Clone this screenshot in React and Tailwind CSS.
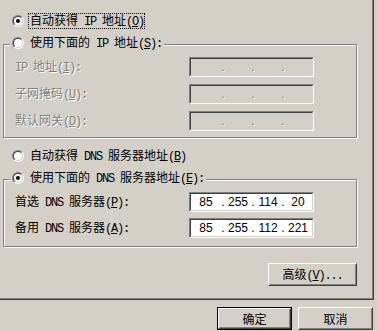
import React from "react";

function Txt({ s }) {
  const parts = s.split(/([\x20-\x7e]+)/).filter((p) => p !== "");
  return (
    <>
      {parts.map((p, i) =>
        /^[\x20-\x7e]+$/.test(p) ? (
          <span key={i} className="font-['Liberation_Mono'] tracking-[-1.2px] whitespace-pre">
            {p}
          </span>
        ) : (
          <span key={i}>{p}</span>
        )
      )}
    </>
  );
}

function Label({ t }) {
  const [a, b] = t.split("&");
  return (
    <span className="whitespace-nowrap leading-[16px]">
      <Txt s={a} />
      <span className="underline">
        <Txt s={b[0]} />
      </span>
      <Txt s={b.slice(1)} />
    </span>
  );
}

function Radio({ checked }) {
  return (
    <div className="w-[12px] h-[12px] shrink-0 rounded-full border border-t-[#808080] border-l-[#808080] border-r-white border-b-white">
      <div className="w-full h-full rounded-full border border-t-[#404040] border-l-[#404040] border-r-[#d4d0c8] border-b-[#d4d0c8] bg-white flex items-center justify-center">
        {checked && <div className="w-[4px] h-[4px] rounded-full bg-black" />}
      </div>
    </div>
  );
}

function IpBox({ v, disabled }) {
  const vals = v || ["", "", "", ""];
  return (
    <div className="w-[125px] h-[20px] border border-t-[#808080] border-l-[#808080] border-r-white border-b-white">
      <div
        className={`h-full border border-t-[#404040] border-l-[#404040] border-r-[#d4d0c8] border-b-[#d4d0c8] flex items-center font-['Liberation_Sans'] text-[12px] leading-[14px] ${
          disabled ? "bg-[#d4d0c8] text-[#808080] [text-shadow:1px_1px_0_#fff]" : "bg-white text-black"
        }`}
      >
        <span className="w-[30px] text-center">{vals[0]}</span>
        <span className="w-[4px] text-center">.</span>
        <span className="w-[26px] text-center">{vals[1]}</span>
        <span className="w-[4px] text-center">.</span>
        <span className="w-[26px] text-center">{vals[2]}</span>
        <span className="w-[4px] text-center">.</span>
        <span className="w-[26px] text-center">{vals[3]}</span>
      </div>
    </div>
  );
}

function Btn({ children, def, w = "w-[75px]" }) {
  if (def) {
    return (
      <div className={`${w} h-[23px] border border-black`}>
        <div className="h-full border border-t-white border-l-white border-r-[#404040] border-b-[#404040]">
          <div className="h-full border border-t-[#d4d0c8] border-l-[#d4d0c8] border-r-[#808080] border-b-[#808080] flex items-center justify-center">
            {children}
          </div>
        </div>
      </div>
    );
  }
  return (
    <div className={`${w} h-[23px] border border-t-white border-l-white border-r-[#404040] border-b-[#404040]`}>
      <div className="h-full border border-t-[#d4d0c8] border-l-[#d4d0c8] border-r-[#808080] border-b-[#808080] flex items-center justify-center">
        {children}
      </div>
    </div>
  );
}

function Row({ label, disabled, v }) {
  return (
    <div className="flex items-center h-[20px]">
      <div
        className={`w-[174px] ${disabled ? "text-[#808080] [text-shadow:1px_1px_0_#fff]" : ""}`}
      >
        <Label t={label} />
      </div>
      <IpBox v={v} disabled={disabled} />
    </div>
  );
}

export default function App() {
  return (
    <div className="w-[377px] h-[331px] bg-[#d4d0c8] overflow-hidden font-['Noto_Sans_CJK_SC',sans-serif] text-[12px] leading-[16px] text-black">
      <div className="w-[374px] h-[300px] border-r border-b border-[#404040]">
        <div className="h-full border-r border-b border-[#808080] pl-[3px] pt-[13px]">
          <div className="w-[354px] flex flex-col">
            {/* radio 1 */}
            <div className="flex items-center h-[16px] pl-[9px]">
              <Radio checked />
              <span className="ml-[4px] h-[16px] border border-dotted border-black pl-[1px] pr-0 flex items-center">
                <Label t="自动获得 IP 地址(&O)" />
              </span>
            </div>

            {/* group 1 */}
            <div className="relative mt-[15px] border border-[#808080] [box-shadow:inset_1px_1px_0_#fff,1px_1px_0_#fff] pt-[12px] pb-[6px] pl-[11px] flex flex-col gap-[7px]">
              <div className="absolute left-[6px] top-[-10px] h-[16px] px-[2px] bg-[#d4d0c8] flex items-center">
                <Radio />
                <span className="ml-[6px]">
                  <Label t="使用下面的 IP 地址(&S):" />
                </span>
              </div>
              <Row label="IP 地址(&I):" disabled />
              <Row label="子网掩码(&U):" disabled />
              <Row label="默认网关(&D):" disabled />
            </div>

            {/* radio 3 */}
            <div className="flex items-center h-[16px] pl-[9px] mt-[10px]">
              <Radio />
              <span className="ml-[6px]">
                <Label t="自动获得 DNS 服务器地址(&B)" />
              </span>
            </div>

            {/* group 2 */}
            <div className="relative mt-[15px] border border-[#808080] [box-shadow:inset_1px_1px_0_#fff,1px_1px_0_#fff] pt-[12px] pb-[8px] pl-[11px] flex flex-col gap-[6px]">
              <div className="absolute left-[6px] top-[-10px] h-[16px] px-[2px] bg-[#d4d0c8] flex items-center">
                <Radio checked />
                <span className="ml-[6px]">
                  <Label t="使用下面的 DNS 服务器地址(&E):" />
                </span>
              </div>
              <Row label="首选 DNS 服务器(&P):" v={["85", "255", "114", "20"]} />
              <Row label="备用 DNS 服务器(&A):" v={["85", "255", "112", "221"]} />
            </div>

            <div className="mt-[16px] flex justify-end">
              <Btn w="w-[89px]">
                <Label t="高级(&V)..." />
              </Btn>
            </div>
          </div>
        </div>
      </div>

      <div className="flex justify-end gap-[6px] pr-[4px] pt-[7px]">
        <Btn def>确定</Btn>
        <Btn>取消</Btn>
      </div>
    </div>
  );
}
